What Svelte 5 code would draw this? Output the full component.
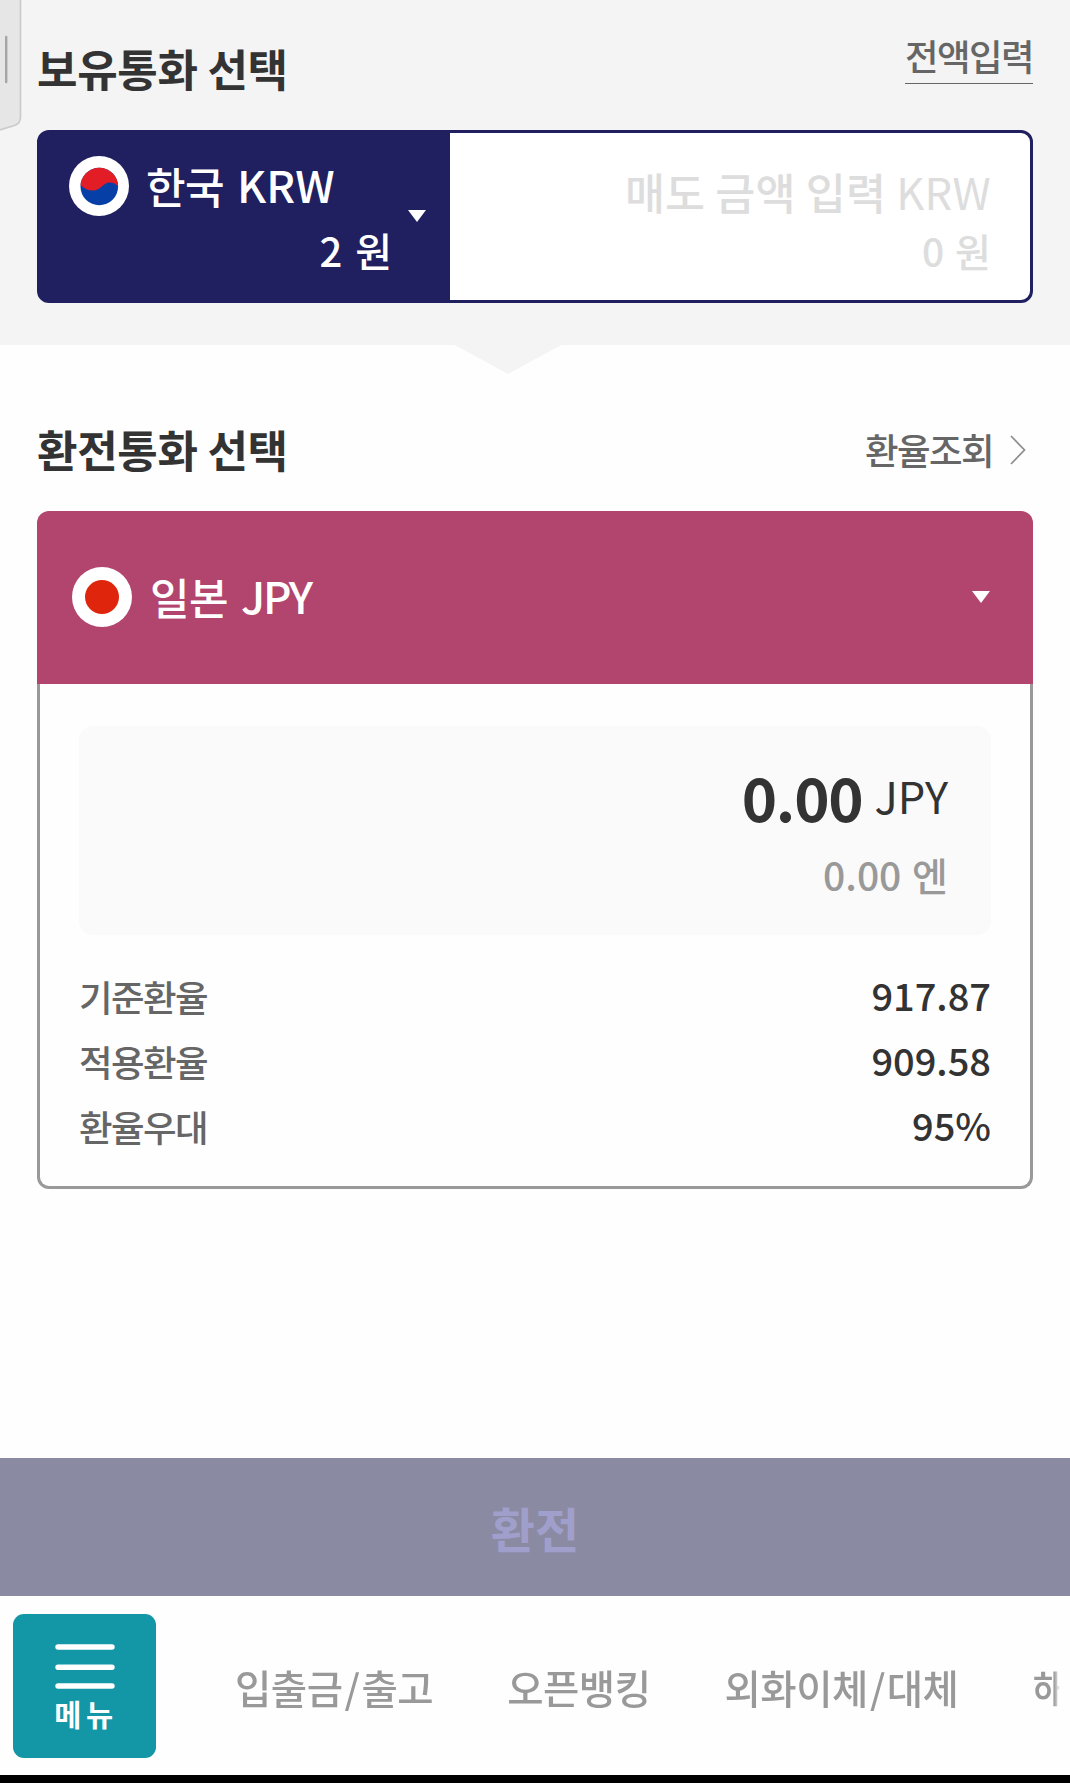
<script lang="ts">
  type Rate = {
    label: string
    value: string
  }

  const rates: Rate[] = [
    { label: "기준환율", value: "917.87" },
    { label: "적용환율", value: "909.58" },
    { label: "환율우대", value: "95%" },
  ]

  const navItems = ["입출금/출고", "오픈뱅킹", "외화이체/대체", "해"]
</script>

<main class="screen">
  <section class="holding">
    <svg class="edge-handle" width="23" height="132" viewBox="0 0 23 132">
      <path d="M-2 -2H20.5V117Q20.5 123.5 14.5 125.5L-2 130.5Z" fill="#e6e6e6" stroke="#cacaca" stroke-width="1.6" />
      <path d="M6.2 37V82" stroke="#a6a6a6" stroke-width="2.4" stroke-linecap="round" />
    </svg>

    <header class="section-head">
      <h2 class="title">보유통화 선택</h2>
      <button class="full-amount">전액입력</button>
    </header>

    <div class="sell-card">
      <button class="sell-currency">
        <div class="sell-info">
          <div class="sell-name">
            <svg class="flag" viewBox="0 0 60 60">
              <circle cx="30" cy="30" r="30" fill="#fff" />
              <circle cx="30.3" cy="30.5" r="18.8" fill="#0640a6" />
              <path d="M11.5 30.5A18.8 18.8 0 0 1 49.1 30.5Q46 26.5 40.5 26.5C34.5 26.5 31.5 34.5 24 34.5Q17 34.5 11.5 29Z" fill="#e31d25" />
            </svg>
            <span class="name">한국</span>
            <span class="code">KRW</span>
          </div>
          <div class="balance">2 원</div>
        </div>
        <svg class="caret" viewBox="0 0 18 12"><path d="M0 0H18L9 12Z" fill="#fff" /></svg>
      </button>
      <div class="sell-input">
        <div class="placeholder">매도 금액 입력 <span>KRW</span></div>
        <div class="placeholder-sub">0 원</div>
      </div>
    </div>

    <svg class="notch" viewBox="0 0 110 30"><path d="M0 0H110L55 30Z" fill="#f4f4f4" /></svg>
  </section>

  <section class="target">
    <header class="section-head">
      <h2 class="title">환전통화 선택</h2>
      <button class="rate-link">
        환율조회
        <svg class="chevron" viewBox="0 0 16 30">
          <path d="M1 1L14.5 15L1 29" fill="none" stroke="#8d8d8d" stroke-width="1.7" />
        </svg>
      </button>
    </header>

    <div class="buy-card">
      <button class="buy-currency">
        <svg class="flag" viewBox="0 0 60 60">
          <circle cx="30" cy="30" r="30" fill="#fff" />
          <circle cx="30" cy="30" r="17" fill="#df260d" />
        </svg>
        <span class="name">일본</span>
        <span class="code jpy">JPY</span>
        <svg class="caret" viewBox="0 0 18 12"><path d="M0 0H18L9 12Z" fill="#fff" /></svg>
      </button>
      <div class="buy-body">
        <div class="amount-box">
          <div class="amount"><strong>0.00</strong><span>JPY</span></div>
          <div class="amount-sub">0.00 엔</div>
        </div>
        <dl class="rates">
          {#each rates as rate}
            <div class="rate">
              <dt>{rate.label}</dt>
              <dd>{rate.value}</dd>
            </div>
          {/each}
        </dl>
      </div>
    </div>
  </section>

  <button class="submit">환전</button>

  <footer class="bottom">
    <button class="menu">
      <svg viewBox="0 0 60 46">
        <path d="M3 3H57M3 23.2H57M3 42H57" stroke="#fff" stroke-width="5.4" stroke-linecap="round" />
      </svg>
      <span>메뉴</span>
    </button>
    <nav class="nav">
      {#each navItems as item}
        <a href="#nav">{#each item.split("/") as part, i}{#if i}<span class="slash">/</span>{/if}{part}{/each}</a>
      {/each}
    </nav>
  </footer>
</main>

<style>
  :global(body) {
    background: #fefefe;
  }

  .screen {
    display: flex;
    flex-direction: column;
    box-sizing: border-box;
    width: 1070px;
    height: 1783px;
    overflow: hidden;
    border-bottom: 8px solid #000;
    background: #fefefe;
    color: #333;
    font-family: "Noto Sans CJK KR", sans-serif;
    font-weight: 500;
    white-space: nowrap;
  }

  button {
    margin: 0;
    padding: 0;
    border: 0;
    background: none;
    color: inherit;
    font: inherit;
  }

  .holding {
    position: relative;
    flex: none;
    box-sizing: border-box;
    height: 345px;
    padding: 0 37px;
    background: #f4f4f4;
  }

  .edge-handle {
    position: absolute;
    left: 0;
    top: 0;
  }

  .notch {
    position: absolute;
    left: 453px;
    top: 344px;
    width: 110px;
    height: 30px;
  }

  .section-head {
    display: flex;
    justify-content: space-between;
    align-items: flex-start;
  }

  .holding .section-head {
    height: 130px;
    padding-top: 32px;
    box-sizing: border-box;
  }

  .title {
    margin: 6px 0 0;
    font-size: 44px;
    line-height: 60px;
    font-weight: 700;
    letter-spacing: -0.3px;
  }

  .full-amount {
    height: 52px;
    border-bottom: 1px solid #666;
    color: #666;
    font-size: 36.5px;
    line-height: 47px;
    padding-bottom: 4px;
    box-sizing: border-box;
    letter-spacing: -1.6px;
  }

  .sell-card {
    display: flex;
    box-sizing: border-box;
    height: 173px;
    overflow: hidden;
    border: 3px solid #202060;
    border-radius: 12px;
    background: linear-gradient(to right, #202060 50px, #fff 50px);
  }

  .sell-currency {
    display: flex;
    box-sizing: border-box;
    width: 410px;
    padding-left: 29px;
    background: #202060;
    color: #fff;
    text-align: left;
  }

  .sell-info {
    display: flex;
    flex-direction: column;
    width: 323px;
    padding-top: 23px;
  }

  .sell-name {
    display: flex;
    align-items: center;
    height: 60px;
  }

  .flag {
    width: 60px;
    height: 60px;
    margin-right: 17px;
  }

  .name {
    font-size: 43px;
    line-height: 58px;
    padding-bottom: 2px;
    letter-spacing: -0.6px;
  }

  .code {
    margin-left: 13px;
    padding-bottom: 4px;
    font-size: 44px;
    line-height: 56px;
  }

  .jpy {
    letter-spacing: -2.2px;
  }

  .balance {
    font-size: 40px;
    line-height: 60px;
    margin-top: 4px;
    text-align: right;
    word-spacing: 4px;
  }

  .caret {
    width: 18px;
    height: 12px;
  }

  .sell-currency .caret {
    margin: 77px 0 0 16px;
  }

  .sell-input {
    flex: 1;
    padding: 29px 39px 0 0;
    color: #ddd;
    text-align: right;
  }

  .placeholder {
    font-size: 43.5px;
    line-height: 60px;
    letter-spacing: 0.2px;
  }

  .placeholder span {
    font-weight: 400;
  }

  .placeholder-sub {
    margin-top: -2px;
    font-size: 39px;
    line-height: 60px;
    word-spacing: 2px;
  }

  .target {
    flex: none;
    height: 1113px;
    box-sizing: border-box;
    padding: 0 37px;
  }

  .target .section-head {
    box-sizing: border-box;
    height: 166px;
    padding-top: 69px;
  }

  .target .title {
    margin-top: 5px;
  }

  .rate-link {
    display: flex;
    align-items: center;
    padding: 6px 7px 0 0;
    color: #666;
    font-size: 36.5px;
    line-height: 60px;
    letter-spacing: -1.6px;
  }

  .chevron {
    width: 16px;
    height: 30px;
    margin-left: 17px;
  }

  .buy-card {
    height: 678px;
  }

  .buy-currency {
    display: flex;
    align-items: center;
    box-sizing: border-box;
    width: 100%;
    height: 173px;
    padding: 0 43px 2px 35px;
    border-radius: 12px 12px 0 0;
    background: #b2456e;
    color: #fff;
  }

  .buy-currency .flag {
    margin-right: 18px;
  }

  .buy-currency .caret {
    margin-left: auto;
  }

  .buy-body {
    box-sizing: border-box;
    height: 505px;
    padding: 42px 39px 0;
    border: 3px solid #999;
    border-top: 0;
    border-radius: 0 0 12px 12px;
  }

  .amount-box {
    box-sizing: border-box;
    height: 209px;
    padding: 34px 43px 0 0;
    border-radius: 14px;
    background: #fafafa;
  }

  .amount {
    display: flex;
    justify-content: flex-end;
    line-height: 72px;
  }

  .amount strong {
    font-size: 60px;
    font-weight: 700;
    letter-spacing: -1.2px;
  }

  .amount span {
    margin-left: 12px;
    font-size: 43.5px;
    font-weight: 400;
  }

  .amount-sub {
    margin-top: 12px;
    color: #999;
    font-size: 39px;
    line-height: 60px;
    text-align: right;
    word-spacing: 2px;
  }

  .rates {
    margin: 28px 0 0;
  }

  .rate {
    display: flex;
    justify-content: space-between;
    height: 65px;
  }

  dt {
    color: #666;
    font-size: 36.5px;
    line-height: 67px;
    letter-spacing: -1.6px;
  }

  dd {
    margin: 0;
    font-size: 38px;
    line-height: 63px;
  }

  .submit {
    flex: none;
    height: 138px;
    background: #8b8aa3;
    color: #a09fcc;
    font-size: 48px;
    font-weight: 700;
  }

  .bottom {
    display: flex;
    flex: none;
    box-sizing: border-box;
    height: 179px;
    padding: 18px 10px 0 13px;
  }

  .menu {
    display: flex;
    flex-direction: column;
    align-items: center;
    width: 143px;
    height: 144px;
    padding-top: 30px;
    box-sizing: border-box;
    border-radius: 11px;
    background: #1396a6;
    color: #fff;
  }

  .menu svg {
    width: 60px;
    height: 46px;
    flex: none;
  }

  .menu span {
    padding-left: 3px;
    font-size: 29.5px;
    line-height: 47px;
    font-weight: 700;
    letter-spacing: 4.5px;
  }

  .nav {
    display: flex;
    flex: 1;
    gap: 74px;
    overflow: hidden;
    padding-left: 79px;
    -webkit-mask-image: linear-gradient(to left, transparent, #000 6px);
    mask-image: linear-gradient(to left, transparent, #000 6px);
  }

  .nav a {
    color: #999;
    font-size: 39.5px;
    line-height: 145px;
    letter-spacing: -0.5px;
    text-decoration: none;
  }

  .slash {
    padding: 0 2px;
  }
</style>
